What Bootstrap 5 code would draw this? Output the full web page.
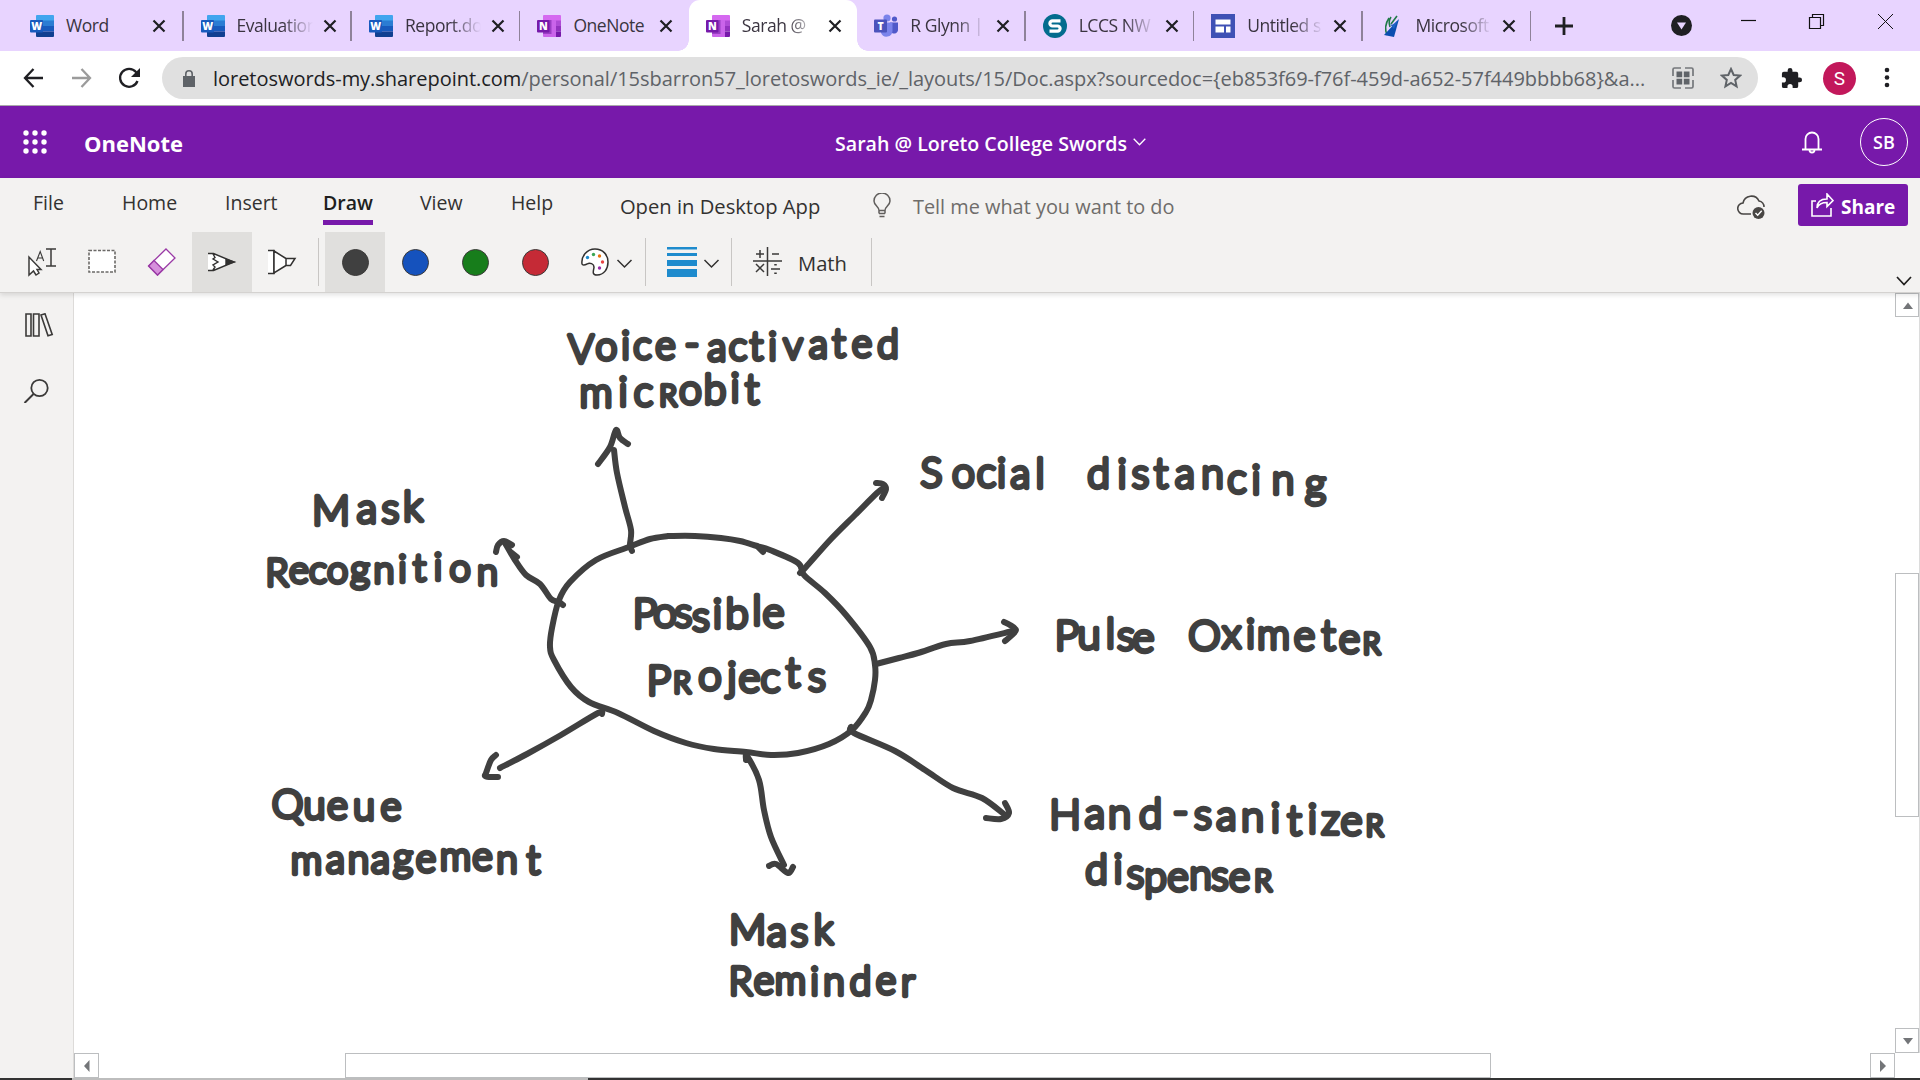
<!DOCTYPE html>
<html lang="en">
<head>
<meta charset="utf-8">
<title>Sarah @ Loreto College Swords</title>
<link href="https://cdn.jsdelivr.net/npm/bootstrap@5.3.0/dist/css/bootstrap.min.css" rel="stylesheet">
<style>
body{width:1920px;height:1080px;overflow:hidden;font-family:"Open Sans","Noto Sans",sans-serif;color:#323130;background:#fff}
svg{display:block;flex:none}
.tabstrip{height:51px;background:#e8d4ff;padding-left:13px}
.btab{width:168.45px;height:51px;padding:0 0 0 17px;position:relative;color:#3a3440;font-size:17.5px;letter-spacing:-.45px;flex:none}
.btab:first-child{width:170.5px}
.btab .ico{width:24px;height:24px;margin-right:12px}
.btab .cap{width:76px;overflow:hidden;white-space:nowrap;margin-right:10px}
.btab .fade-end{-webkit-mask-image:linear-gradient(90deg,#000 60%,transparent);mask-image:linear-gradient(90deg,#000 60%,transparent)}
.btab.sep::after{content:"";position:absolute;right:0;top:11px;width:1.5px;height:30px;background:#8f8299}
.btab.current{background:#fff;border-radius:11px 11px 0 0}
.btab.current::before,.btab.current::after{content:"";position:absolute;bottom:0;width:11px;height:11px}
.btab.current::before{left:-11px;background:radial-gradient(circle at 0 0,transparent 10.5px,#fff 11px)}
.btab.current::after{right:-11px;background:radial-gradient(circle at 100% 0,transparent 10.5px,#fff 11px)}
.addressbar{height:55px;border-bottom:1px solid #a9a9ab;padding-left:23px}
.omnibox{width:1596px;height:42px;border-radius:21px;background:#e0e0e0;padding:0 16px 0 21px;margin-left:22px}
.url{font-size:20px;letter-spacing:-.035px;color:#5f6368;white-space:nowrap;margin-left:18px;width:1459px;padding-top:1px}
.url b{font-weight:400;color:#202124}
.profile{width:33px;height:33px;background:#c2185b;color:#fff;font:19px Roboto,sans-serif;line-height:33px}
.appbar{height:72px;background:#7719aa;color:#fff}
.brand{font-weight:700;font-size:22px;margin-left:37px;width:751px;padding-top:2px}
.docname{font-weight:600;font-size:19.6px;width:298px;white-space:nowrap;padding-top:3px}
.avatar{width:48px;height:48px;border:1.5px solid #fff;font-size:18px;font-weight:600}
.ribbon{height:115px;background:#f3f2f1;border-bottom:1px solid #d4d2d0;box-shadow:0 2px 5px rgba(0,0,0,.12);z-index:2;position:relative}
.menurow{height:54px;font-size:19.5px;white-space:nowrap;padding-left:33px}
.menurow .mi{height:50px;line-height:50px;flex:none}
.menurow .picked{color:#201f1e;font-weight:600;position:relative}
.menurow .picked::after{content:"";position:absolute;left:0;right:0;top:42px;height:5px;background:#7719aa}
.lower{line-height:57px;height:54px;font-size:20.2px}
.tellme{font-size:19.9px;color:#6f6d6b;margin-left:22px}
.share{width:110px;height:42px;background:#7719aa;color:#fff;border-radius:3px;font-size:19px;font-weight:700;margin:6px 12px 0 0;padding-left:13px}
.toolrow{height:60px;padding-left:12px}
.tool{width:60px;height:60px;flex:none}
.tool.on{background:#e0dfdd}
.rule{width:1px;height:48px;background:#c8c6c4;flex:none}
.dot{width:27px;height:27px;border-radius:50%;border:1.5px solid #3b3a39}
.rail{width:74px;background:#f3f2f1;border-right:1px solid #dddbd9;padding-top:20px}
.sb{border:1px solid #bcbec0;background:#fff;flex:none}
.vbar{width:25px;border-right:1px solid #dcdcdc}
.hbar{height:25px}
.edge{height:2px;background:#333;padding-left:72px}
.edge div{width:516px;background:#bdbdbd}
.inktext{font-family:Lato,"Open Sans",sans-serif;font-weight:300;fill:#404040;stroke:#404040;stroke-width:4.3;stroke-linejoin:round;text-anchor:middle}
.inktext .capital{font-variant:small-caps}
</style>
<script src="https://cdn.jsdelivr.net/npm/bootstrap@5.3.0/dist/js/bootstrap.bundle.min.js"></script>
</head>
<body class="d-flex flex-column">
<svg class="d-none">
 <symbol id="x" viewBox="0 0 14 14"><path d="M1.5 1.5l11 11M12.5 1.5l-11 11" stroke="#1f1f23" stroke-width="2.2"/></symbol>
 <symbol id="word" viewBox="0 0 24 24"><path d="M7 1h16a1 1 0 0 1 1 1v5H6V2a1 1 0 0 1 1-1z" fill="#41a5ee"/><path d="M6 6.500h18V12H6z" fill="#2b7cd3"/><path d="M6 12h18v5.500H6z" fill="#185abd"/><path d="M6 17.500h18V22a1 1 0 0 1-1 1H7a1 1 0 0 1-1-1z" fill="#103f91"/><rect y="6" width="13" height="12.500" rx="1" fill="#185abd"/><text x="6.500" y="16" text-anchor="middle" font-family="Open Sans" font-size="10.500" font-weight="800" fill="#fff">W</text></symbol>
 <symbol id="one" viewBox="0 0 24 24"><path d="M7 1h16a1 1 0 0 1 1 1v5H6V2a1 1 0 0 1 1-1z" fill="#d569f0"/><path d="M6 6h13v17H7a1 1 0 0 1-1-1z" fill="#ca64ea"/><path d="M19 6.500h5V12h-5z" fill="#ae4bd5"/><path d="M19 12h5v5.500h-5z" fill="#9332bf"/><path d="M19 17.500h5V22a1 1 0 0 1-1 1h-4z" fill="#7719aa"/><path d="M6 6h8.500v14H6z" fill="#9b3ec4"/><rect y="6" width="12.500" height="12.500" rx="1" fill="#7719aa"/><text x="6.200" y="16" text-anchor="middle" font-family="Open Sans" font-size="10.500" font-weight="800" fill="#fff">N</text></symbol>
</svg>

<header class="tabstrip d-flex align-items-center">
 <div class="btab sep d-flex align-items-center"><svg class="ico"><use href="#word"/></svg><span class="cap">Word</span><svg width="14" height="14"><use href="#x"/></svg></div>
 <div class="btab sep d-flex align-items-center"><svg class="ico"><use href="#word"/></svg><span class="cap fade-end">Evaluation</span><svg width="14" height="14"><use href="#x"/></svg></div>
 <div class="btab sep d-flex align-items-center"><svg class="ico"><use href="#word"/></svg><span class="cap fade-end">Report.docx</span><svg width="14" height="14"><use href="#x"/></svg></div>
 <div class="btab d-flex align-items-center"><svg class="ico"><use href="#one"/></svg><span class="cap">OneNote</span><svg width="14" height="14"><use href="#x"/></svg></div>
 <div class="btab current d-flex align-items-center"><svg class="ico"><use href="#one"/></svg><span class="cap fade-end">Sarah @</span><svg width="14" height="14"><use href="#x"/></svg></div>
 <div class="btab sep d-flex align-items-center"><svg class="ico" viewBox="0 0 24 24"><circle cx="13" cy="4" r="3.600" fill="#7b83eb"/><circle cx="20.500" cy="5" r="2.600" fill="#5059c9"/><path d="M16 8.500h8V15a4 4 0 0 1-6 4z" fill="#5059c9"/><path d="M7 8.500h11.500V17a6 6 0 0 1-11.500 2z" fill="#7b83eb"/><rect y="5.500" width="13" height="13" rx="1" fill="#4b53bc"/><text x="6.500" y="15.800" text-anchor="middle" font-family="Open Sans" font-size="10.500" font-weight="800" fill="#fff">T</text></svg><span class="cap fade-end">R Glynn |</span><svg width="14" height="14"><use href="#x"/></svg></div>
 <div class="btab sep d-flex align-items-center"><svg class="ico" viewBox="0 0 24 24"><circle cx="12" cy="12" r="12" fill="#036c8e"/><path d="M17.500 6.800H9.500a2.500 2.500 0 0 0 0 5.200h5a2.600 2.600 0 0 1 0 5.200H6.500" fill="none" stroke="#fff" stroke-width="3.200" stroke-linejoin="round"/></svg><span class="cap fade-end">LCCS NW</span><svg width="14" height="14"><use href="#x"/></svg></div>
 <div class="btab sep d-flex align-items-center"><svg class="ico" viewBox="0 0 24 24"><path d="M0 0h24v24H0z" fill="#3f51b5"/><path d="M4.500 5.500h15v5h-15zM4.500 12.500h8.500v6H4.500zM15 12.500h4.500v6H15z" fill="#fff"/></svg><span class="cap fade-end">Untitled s</span><svg width="14" height="14"><use href="#x"/></svg></div>
 <div class="btab sep d-flex align-items-center"><svg class="ico" viewBox="0 0 24 24"><path d="M9 4C5 10 5 16 7 21M11 3c-2 3-2 7-1 10M17 2l-6 8" fill="none" stroke="#207a48" stroke-width="1.600"/><path d="M19 5L4 21l10 2z" fill="#0b4db0"/><path d="M9 9c2 3 4 2 9-3l-4 9z" fill="#1f62c4"/></svg><span class="cap fade-end">Microsoft</span><svg width="14" height="14"><use href="#x"/></svg></div>
 <svg width="18" height="18" class="ms-4" viewBox="0 0 18 18"><path d="M9 0v18M0 9h18" stroke="#1f1f23" stroke-width="2.800"/></svg>
 <svg width="21" height="21" style="margin-left:98px" viewBox="0 0 21 21"><circle cx="10.500" cy="10.500" r="10.500" fill="#1f1f23"/><path d="M6 7.500h9l-4.500 7z" fill="#e8d4ff"/></svg>
 <svg width="228" height="51" viewBox="1692 0 228 51" fill="none" stroke="#111"><path d="M1741 20.500h15" stroke-width="1.200"/><path d="M1809.500 17.500h11v11h-11zM1812.500 17.500v-3h11v11h-3" stroke-width="1.200"/><path d="M1878 14l15 15M1893 14l-15 15" stroke-width="1"/></svg>
</header>

<section class="addressbar d-flex align-items-center">
 <svg width="117" height="24" viewBox="0 0 117 24" fill="none" stroke-width="2.300"><path d="M20 12H2M10.500 3L2 12l8.500 9" stroke="#1f1f23"/><path d="M49 12h18M58.500 3L67 12l-8.500 9" stroke="#9b9b9b"/><path d="M114.500 15a9 9 0 1 1-1.500-9l3 3" stroke="#1f1f23"/><path d="M117 2v9h-9z" fill="#1f1f23"/></svg>
 <div class="omnibox d-flex align-items-center">
  <svg width="12" height="17" viewBox="0 0 12 17"><path d="M0 6h12v11H0z" fill="#5f6368"/><path d="M2.800 7V4a3.200 3.200 0 0 1 6.400 0v3" fill="none" stroke="#5f6368" stroke-width="1.600"/></svg>
  <span class="url"><b>loretoswords-my.sharepoint.com</b>/personal/15sbarron57_loretoswords_ie/_layouts/15/Doc.aspx?sourcedoc={eb853f69-f76f-459d-a652-57f449bbbb68}&amp;a...</span>
  <svg width="22" height="22" viewBox="0 0 22 22" fill="none" stroke="#74777b" stroke-width="1.700"><path d="M1 9V2.500Q1 1 2.500 1H9M13 1h6.500Q21 1 21 2.500V9M21 13v6.500q0 1.500-1.500 1.500H13M9 21H2.500Q1 21 1 19.500V13"/><path d="M4.500 4.500h5.700v5.700H4.500zM11.800 4.500h5.700v5.700h-5.700zM4.500 11.800h5.700v5.700H4.500zM11.800 11.800h5.700v5.700h-5.700z" fill="#5f6368" stroke="none"/></svg>
  <svg width="22" height="22" style="margin-left:26px" viewBox="0 0 22 22"><path d="M11 2l2.700 6 6.300.6-4.800 4.300 1.400 6.500L11 16l-5.600 3.400 1.400-6.500L2 8.600 8.300 8z" fill="none" stroke="#5f6368" stroke-width="2"/></svg>
 </div>
 <svg width="23" height="23" viewBox="0 0 24 24" style="margin-left:22px"><path d="M20.500 11H19V7a2 2 0 0 0-2-2h-4V3.500a2.500 2.500 0 0 0-5 0V5H4a2 2 0 0 0-2 2v3.800h1.500a2.700 2.700 0 0 1 0 5.400H2V20a2 2 0 0 0 2 2h3.800v-1.500a2.700 2.700 0 0 1 5.400 0V22H17a2 2 0 0 0 2-2v-4h1.500a2.500 2.500 0 0 0 0-5z" fill="#1f1f23"/></svg>
 <div class="profile rounded-circle text-center" style="margin-left:20px">S</div>
 <svg width="6" height="22" viewBox="0 0 6 22" style="margin-left:28px" fill="#1f1f23"><circle cx="3" cy="3" r="2.300"/><circle cx="3" cy="10.500" r="2.300"/><circle cx="3" cy="18" r="2.300"/></svg>
</section>

<nav class="appbar d-flex align-items-center">
 <svg width="24" height="24" style="margin-left:23px" viewBox="0 0 24 24" fill="#fff"><circle cx="3" cy="3" r="2.700"/><circle cx="12" cy="3" r="2.700"/><circle cx="21" cy="3" r="2.700"/><circle cx="3" cy="12" r="2.700"/><circle cx="12" cy="12" r="2.700"/><circle cx="21" cy="12" r="2.700"/><circle cx="3" cy="21" r="2.700"/><circle cx="12" cy="21" r="2.700"/><circle cx="21" cy="21" r="2.700"/></svg>
 <span class="brand">OneNote</span>
 <span class="docname">Sarah @ Loreto College Swords</span>
 <svg width="13" height="8" viewBox="0 0 13 8"><path d="M.7.700l5.800 6 5.800-6" fill="none" stroke="#fff" stroke-width="1.300"/></svg>
 <svg width="20" height="23" viewBox="0 0 20 23" class="ms-auto" fill="none" stroke="#fff" stroke-width="1.800"><path d="M0 18.500h20M3.500 18.500V8a6.500 6.500 0 0 1 13 0v10.500M7.500 19a2.500 2.500 0 0 0 5 0"/></svg>
 <div class="avatar rounded-circle d-flex align-items-center justify-content-center" style="margin:0 12px 0 38px">SB</div>
</nav>

<section class="ribbon">
 <div class="menurow d-flex">
  <span class="mi" style="width:89px">File</span><span class="mi" style="width:103px">Home</span><span class="mi" style="width:98px">Insert</span><span class="mi picked">Draw</span><span class="mi" style="margin-left:47px;width:91px">View</span><span class="mi" style="width:109px">Help</span>
  <span class="lower" style="width:253px">Open in Desktop App</span>
  <svg width="18" height="25" viewBox="0 0 18 25" style="margin-top:15px" fill="none" stroke="#605e5c" stroke-width="1.500"><path d="M6 17.500c0-4-5-5-5-9.500a8 8 0 0 1 16 0c0 4.500-5 5.500-5 9.500zM6 20.500h6M6.500 23.500h5M6 17v3.500M12 17v3.500"/></svg>
  <span class="lower tellme">Tell me what you want to do</span>
  <svg width="29" height="26" viewBox="0 0 29 26" class="ms-auto" style="margin:15px 32px 0 0" fill="none" stroke="#484644" stroke-width="1.600"><path d="M14 21H6.500a5.500 5.500 0 0 1-.5-11 8.500 8.500 0 0 1 16-2 6 6 0 0 1 5 6"/><circle cx="21.500" cy="20" r="6" fill="#484644" stroke="none"/><path d="M18.500 20l2.200 2.300 4-4.500" stroke="#fff" stroke-width="1.400"/></svg>
  <div class="share d-flex align-items-center"><svg width="23" height="24" viewBox="0 0 23 24" fill="none" stroke="#fff" stroke-width="1.600" style="margin-right:7px"><path d="M5 8H1v15h19v-8M6 15c0-7 4-9 10-9V1l6 6.500-6 6V9.500c-5 0-8 1-10 5.500z"/></svg><span class="pt-1">Share</span></div>
 </div>
 <div class="d-flex">
 <div class="toolrow d-flex align-items-center">
  <div class="tool"><svg width="60" height="60" viewBox="12 232 60 60" fill="none" stroke="#3b3a39" stroke-width="1.500"><path d="M29 257v18l4.500-4 2.500 4 3-2-2-3.500h4z" fill="#fff"/><path d="M36.500 261l3.700-9.500 3.500 9.500M38 258h4.700" stroke-width="1.100"/><path d="M46 249h10M51 249v17M46 266h10"/></svg></div>
  <div class="tool"><svg width="60" height="60" viewBox="0 0 60 60"><rect x="17" y="18.500" width="26" height="21.500" fill="#fff" stroke="#6b6967" stroke-width="1.600" stroke-dasharray="3 1.500"/></svg></div>
  <div class="tool"><svg width="60" height="60" viewBox="0 0 60 60" stroke="#9a3aa6" stroke-width="1.300"><path d="M34 17l9 9-17.500 17-9-9z" fill="#fff"/><path d="M22 28.500l9 9-5.500 5.500-8.800-9z" fill="#d68fdc"/></svg></div>
  <div class="tool on"><svg width="60" height="60" viewBox="0 0 60 60" fill="#fff" stroke="#323130" stroke-width="1.400"><path d="M16 21.500h5L42 30l-21 8.500h-5z" stroke="none"/><path d="M16 21.500h5.500L42 30l-20.500 8.500H16M21 22l2 3.500-2 1.500 5 3-5 3 2 2-2 3" fill="none"/><path d="M34 27.500l8 2.500-8 2.500z" fill="#323130"/></svg></div>
  <div class="tool"><svg width="60" height="60" viewBox="0 0 60 60" fill="#fff" stroke="#323130" stroke-width="1.500"><path d="M16 18.500h6v23h-6" stroke-width="1.500"/><path d="M22 19l12 7.500v7L22 41zM34 26.500h9l-4.500 7H34z"/></svg></div>
  <div class="rule" style="margin:0 6px"></div>
  <div class="tool on d-flex align-items-center justify-content-center"><div class="dot" style="background:#404040"></div></div>
  <div class="tool d-flex align-items-center justify-content-center"><div class="dot" style="background:#1552bd"></div></div>
  <div class="tool d-flex align-items-center justify-content-center"><div class="dot" style="background:#177d1b"></div></div>
  <div class="tool d-flex align-items-center justify-content-center"><div class="dot" style="background:#c52a36"></div></div>
  <svg width="80" height="60" viewBox="565 232 80 60"><path d="M582 264c-1-8 5-15 13-15s13 6 13 13-4 13-11 13c-6 0-3-5-3-8s-4-5-7-3c-3 1.500-4.500 1-5 0z" fill="#fff" stroke="#323130" stroke-width="1.500"/><circle cx="587.500" cy="257.500" r="1.700" fill="#1e8bcd"/><circle cx="593.500" cy="254.500" r="1.700" fill="#3aa655"/><circle cx="599.500" cy="256" r="1.700" fill="#e8730c"/><circle cx="602.500" cy="262" r="1.700" fill="#e84444"/><circle cx="599.500" cy="268" r="1.700" fill="#9a2ca8"/><path d="M617.500 260l7 7 7-7" fill="none" stroke="#323130" stroke-width="1.500"/></svg>
  <div class="rule"></div>
  <svg width="85" height="60" viewBox="646 232 85 60"><path d="M667 247h30v2.500h-30zM667 253h30v3h-30zM667 260h30v6h-30zM667 269h30v8h-30z" fill="#1e8bcd"/><path d="M704.500 260l7 7 7-7" fill="none" stroke="#323130" stroke-width="1.500"/></svg>
  <div class="rule"></div>
  <svg width="66" height="60" viewBox="732 232 66 60" fill="none" stroke="#3b3a39" stroke-width="1.500"><path d="M753 261h29M767.500 247v29M756 254h8M760 250v8M772 254h7M756 264l8 8M764 264l-8 8M771 269h9"/><path d="M775.500 264v1.500M775.500 272.500v1.500" stroke-width="2.500"/></svg>
  <span style="width:73px;font-size:20.2px;padding-top:3px">Math</span>
  <div class="rule"></div>
 </div>
 <svg width="16" height="10" viewBox="0 0 16 10" class="ms-auto" style="margin:44px 8px 0 0"><path d="M1 1l7 7.500L15 1" fill="none" stroke="#201f1e" stroke-width="1.700"/></svg>
 </div>
</section>

<main class="d-flex flex-grow-1" style="min-height:0">
 <aside class="rail flex-shrink-0">
  <svg width="73" height="90" viewBox="0 313 73 90" fill="none" stroke="#3b3a39" stroke-width="1.600"><path d="M26 314h5v22h-5zM33.500 314H39v22h-5.500zM41 315l4-1.200 7.200 20.700-4.200 1.300z"/><circle cx="39.500" cy="388" r="8.200" stroke-width="1.800"/><path d="M33.500 394L24.500 403" stroke-width="2"/></svg>
 </aside>
 <div class="d-flex flex-column flex-grow-1">
  <div class="d-flex flex-grow-1" style="min-height:0">
   <svg id="page" width="1821" height="760" viewBox="74 293 1821 760">
    <g id="strokes" fill="none" stroke="#404040" stroke-width="6" stroke-linecap="round" stroke-linejoin="round"></g>
    <g id="notes" class="inktext"></g>
   </svg>
   <div class="vbar d-flex flex-column">
    <div class="sb" style="height:24px"><svg width="23" height="22" viewBox="0 0 23 22"><path d="M7 15l5-6.500 5 6.500z" fill="#737578"/></svg></div>
    <div class="sb" style="height:244px;margin-top:256px"></div>
    <div class="sb mt-auto" style="height:25px"><svg width="23" height="22" viewBox="0 0 23 22"><path d="M7 9l5 6.500L17 9z" fill="#737578"/></svg></div>
   </div>
  </div>
  <div class="hbar d-flex">
   <div class="sb" style="width:25px"><svg width="23" height="23" viewBox="0 0 23 23"><path d="M14.500 6v12L9 12z" fill="#737578"/></svg></div>
   <div class="sb" style="width:1146px;margin-left:246px"></div>
   <div class="sb ms-auto" style="width:25px;margin-right:25px"><svg width="23" height="23" viewBox="0 0 23 23"><path d="M9 6v12l6-6z" fill="#737578"/></svg></div>
  </div>
 </div>
</main>
<div class="edge d-flex"><div></div></div>

<script>
const NS = "http://www.w3.org/2000/svg";
/* Pen strokes as lists of x,y points, smoothed into curves */
const strokes = [
 "668,536 695,536 721,538 740,541 757,546 770,550 798,563 804,575 825,593 846,615 870,647 875,665 875,680 871,700 866,712 852,730 829,744 798,753 771,755 746,752 714,749 686,743 654,731 618,713 589,702 571,687 554,660 550,647 552,628 559,600 570,582 596,560 629,547 650,539 668,536",
 "757,546 763,552",
 "614,450 617,473 625,507 631,530 630,545 632,551",
 "598,464 610,447 616,430 620,438 628,444",
 "563,605 559,602 551,599 540,584 526,575 515,560 505,543",
 "496,552 498,545 504,541 512,545", "512,553 517,557",
 "800,573 806,567 831,539 855,515 877,493 885,487",
 "876,483 883,484 886,489 882,498",
 "876,664 899,658 918,653 946,644 970,641 1013,631",
 "1004,622 1010,625 1016,630 1011,636 1005,641",
 "851,727 854,733 895,751 925,770 953,788 982,798 1005,815",
 "1005,803 1009,813 1001,819 986,818",
 "746,760 747,756 759,780 764,810 771,837 784,865",
 "769,866 776,864 788,873 793,867",
 "602,714 598,713 561,735 527,754 500,768",
 "496,755 491,760 486,773 485,776 489,777 498,777"
];
strokes.forEach(s => {
  const p = s.split(" ").map(q => q.split(",").map(Number));
  let d = "M" + p[0];
  for (let i = 0; i < p.length - 1; i++) {
    const a = p[i-1] || p[i], b = p[i], c = p[i+1], e = p[i+2] || c;
    d += `C${b[0]+(c[0]-a[0])/6},${b[1]+(c[1]-a[1])/6} ${c[0]-(e[0]-b[0])/6},${c[1]-(e[1]-b[1])/6} ${c}`;
  }
  const el = document.createElementNS(NS, "path");
  el.setAttribute("d", d);
  document.getElementById("strokes").append(el);
});
/* Notes: word, left edge of each letter and the word's right edge, baseline of each letter, font size.
   A "*" marks a letter written as a small capital. */
const notes = [
 ["Voice-activated","568 597 619 635 653 681 706 731 748 768 780 809 831 850 877 902","363 360 359 359 359 357 361 360 360 360 359 358 357 357 358",39],
 ["mic*robit","578 617 632 658 681 703 730 743 764","407 406 406 406 404 404 402 404",41],
 ["Mask","313 355 382 402 427","525 523 523 521",42],
 ["Recognition","267 290 311 328 350 373 398 410 432 447 476 502","586 583 583 583 582 583 582 581 580 581 585",38],
 ["Possible","637 656 677 693 712 726 751 766 784","628 627 627 631 628 628 625 627",42],
 ["P*rojects","650 671 696 727 740 762 782 807 830","695 693 690 691 692 692 687 691",42],
 ["Social","914 952 978 998 1008 1036 1047","487 487 487 487 488 488",41],
 ["distancing","1085 1115 1132 1152 1173 1200 1228 1249 1266 1303 1331","488 488 488 488 488 488 493 494 494 498",41],
 ["Pulse","1060 1077 1104 1120 1135 1155","650 649 648 650 652",42],
 ["Oximete*r","1192 1220 1246 1258 1292 1320 1340 1362 1384","650 648 648 649 650 650 653 654",41],
 ["Queue","273 305 327 351 380 405","818 819 819 820 820",40],
 ["management","292 324 350 370 394 415 440 474 494 523 547","874 873 873 873 871 872 870 870 873 874",39],
 ["Mask","731 767 790 812 838","944 946 946 944",41],
 ["Reminder","729 755 776 808 824 847 877 898 921","995 994 994 995 995 995 994 996",39],
 ["Hand-sanitize*r","1049 1084 1109 1133 1171 1193 1216 1240 1268 1286 1306 1322 1342 1364 1388","829 828 828 828 825 829 830 831 832 835 833 834 835 836",42],
 ["dispense*r","1086 1110 1129 1145 1169 1190 1214 1229 1253 1276","884 883 888 891 891 889 890 891 891",41]
];
notes.forEach(([word, xs, ys, size]) => {
  const e = xs.split(" ").map(Number);
  const mids = e.slice(0, -1).map((v, i) => v + Math.min(e[i+1] - v - 3, 36) / 2);
  const t = document.createElementNS(NS, "text");
  t.setAttribute("x", mids.join(" "));
  t.setAttribute("y", ys);
  t.setAttribute("font-size", size);
  const star = word.indexOf("*");
  if (star < 0) t.textContent = word;
  else {
    const cap = document.createElementNS(NS, "tspan");
    cap.setAttribute("class", "capital");
    cap.textContent = "r";
    const at = word.indexOf("r", star);
    t.append(word.slice(0, at).replace("*", ""), cap, word.slice(at + 1));
  }
  document.getElementById("notes").append(t);
});
</script>
</body>
</html>
